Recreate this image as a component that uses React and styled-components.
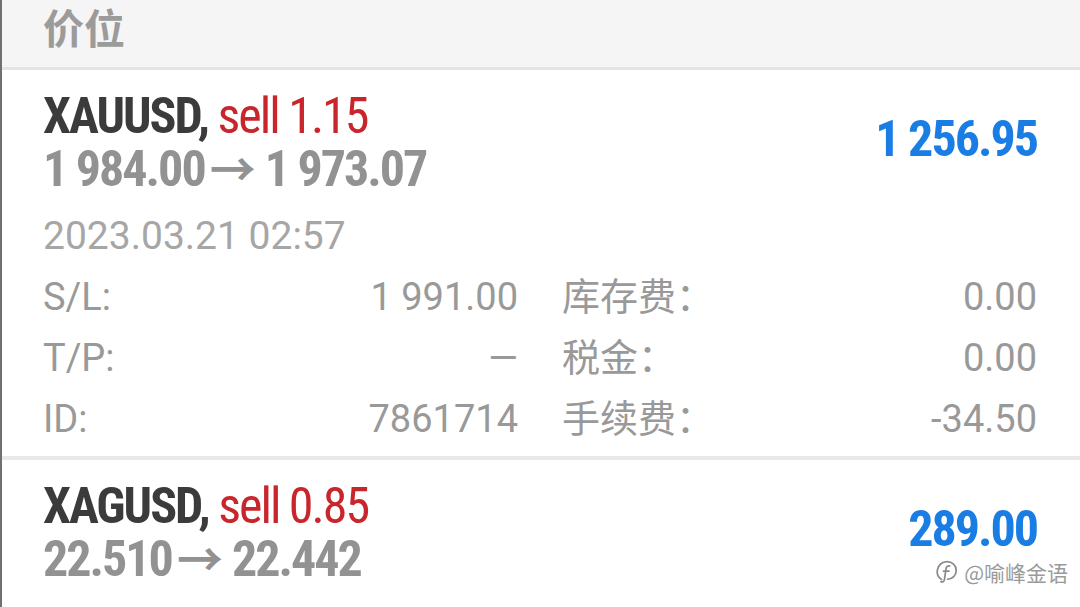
import React from "react";
import styled, { createGlobalStyle } from "styled-components";

const GlobalStyle = createGlobalStyle`
  html, body {
    margin: 0;
    padding: 0;
    background: #fff;
  }
  body {
    font-family: Roboto, "Noto Sans CJK SC", sans-serif;
  }
`;

const Page = styled.div`
  border-left: 2px solid #707070;
  box-sizing: border-box;
  height: 607px;
  overflow: hidden;
  position: relative;
`;
const Header = styled.div`
  background-color: #f5f5f5;
  border-bottom: 3px solid #e4e4e4;
  box-sizing: border-box;
  height: 70px;
  padding-left: 41px;
`;
const HeaderTitle = styled.h2`
  color: #9b9b9b;
  font-family: "Noto Sans CJK SC", sans-serif;
  font-size: 41px;
  font-weight: 700;
  line-height: 52px;
  margin: 0;
`;
const Card = styled.div`
  background-color: #fff;
  border-bottom: 4px solid #e8e8e8;
  padding: 21px 43px ${(p) => (p.$expanded ? "6px" : "23px")} 41px;
`;
const Top = styled.div`
  align-items: center;
  display: flex;
  justify-content: space-between;
`;
const Condensed = styled.div`
  font-family: "Roboto Condensed", "Liberation Sans Narrow", Roboto, sans-serif;
  font-size: 50px;
  font-stretch: 75%;
  font-weight: 700;
  letter-spacing: -2px;
  line-height: 50px;
  white-space: nowrap;
`;
const Title = styled(Condensed)`
  color: #3b3b3b;
`;
const Side = styled.span`
  color: #c9252c;
  font-weight: 400;
`;
const Prices = styled(Condensed)`
  color: #929292;
`;
const Arrow = styled.span`
  font-family: "Noto Sans CJK SC", sans-serif;
  font-size: 46px;
  font-weight: 700;
  letter-spacing: 0;
  margin: 0 9px 0 5px;
`;
const Profit = styled(Condensed)`
  color: #1a7de3;
  margin-bottom: 7px;
`;
const DateLine = styled.div`
  color: #a6a6a6;
  font-size: 39px;
  line-height: 61px;
  margin-top: 12px;
`;
const Details = styled.div`
  column-gap: 44px;
  display: grid;
  grid-template-columns: 1fr 1fr;
`;
const Field = styled.div`
  color: #999;
  display: flex;
  font-size: 38px;
  justify-content: space-between;
  line-height: 61px;
`;
const Watermark = styled.div`
  align-items: center;
  bottom: 22px;
  color: #9a9a9a;
  display: flex;
  font-family: "Noto Sans CJK SC", sans-serif;
  font-size: 21px;
  gap: 5px;
  line-height: 26px;
  position: absolute;
  right: 12px;
  text-shadow: 0 0 2px #fff;
`;

const positions = [
  {
    symbol: "XAUUSD,",
    side: "sell 1.15",
    open: "1 984.00",
    close: "1 973.07",
    profit: "1 256.95",
    time: "2023.03.21 02:57",
    fields: [
      ["S/L:", "1 991.00"],
      ["库存费：", "0.00"],
      ["T/P:", "—"],
      ["税金：", "0.00"],
      ["ID:", "7861714"],
      ["手续费：", "-34.50"],
    ],
  },
  {
    symbol: "XAGUSD,",
    side: "sell 0.85",
    open: "22.510",
    close: "22.442",
    profit: "289.00",
  },
];

function Logo() {
  return (
    <svg width="24" height="26" viewBox="0 0 22 24" fill="none" stroke="#8a8a8a" strokeWidth="1.6" strokeLinecap="round">
      <path d="M6 19c-3-2-4.5-5-4-8.5C2.7 5.5 6.5 2.5 11 2.5c4.8 0 8.5 3.4 8.5 8 0 4.4-3.4 8-8 8.2" />
      <path d="M13.5 6.5c-1.6-.6-3 .2-3.3 2L8.6 19c-.3 1.8-1.6 2.6-3.2 2" />
      <path d="M7.8 11.2h5" />
    </svg>
  );
}

function Position({ item }) {
  return (
    <Card $expanded={!!item.fields}>
      <Top>
        <div>
          <Title>
            {item.symbol} <Side>{item.side}</Side>
          </Title>
          <Prices>
            {item.open}
            <Arrow>→</Arrow>
            {item.close}
          </Prices>
        </div>
        <Profit>{item.profit}</Profit>
      </Top>
      {item.fields && (
        <>
          <DateLine>{item.time}</DateLine>
          <Details>
            {item.fields.map(([label, value]) => (
              <Field key={label}>
                <span>{label}</span>
                <span>{value}</span>
              </Field>
            ))}
          </Details>
        </>
      )}
    </Card>
  );
}

export default function App() {
  return (
    <Page>
      <GlobalStyle />
      <Header>
        <HeaderTitle>价位</HeaderTitle>
      </Header>
      {positions.map((item) => (
        <Position key={item.symbol} item={item} />
      ))}
      <Watermark>
        <Logo />
        <span>@喻峰金语</span>
      </Watermark>
    </Page>
  );
}
